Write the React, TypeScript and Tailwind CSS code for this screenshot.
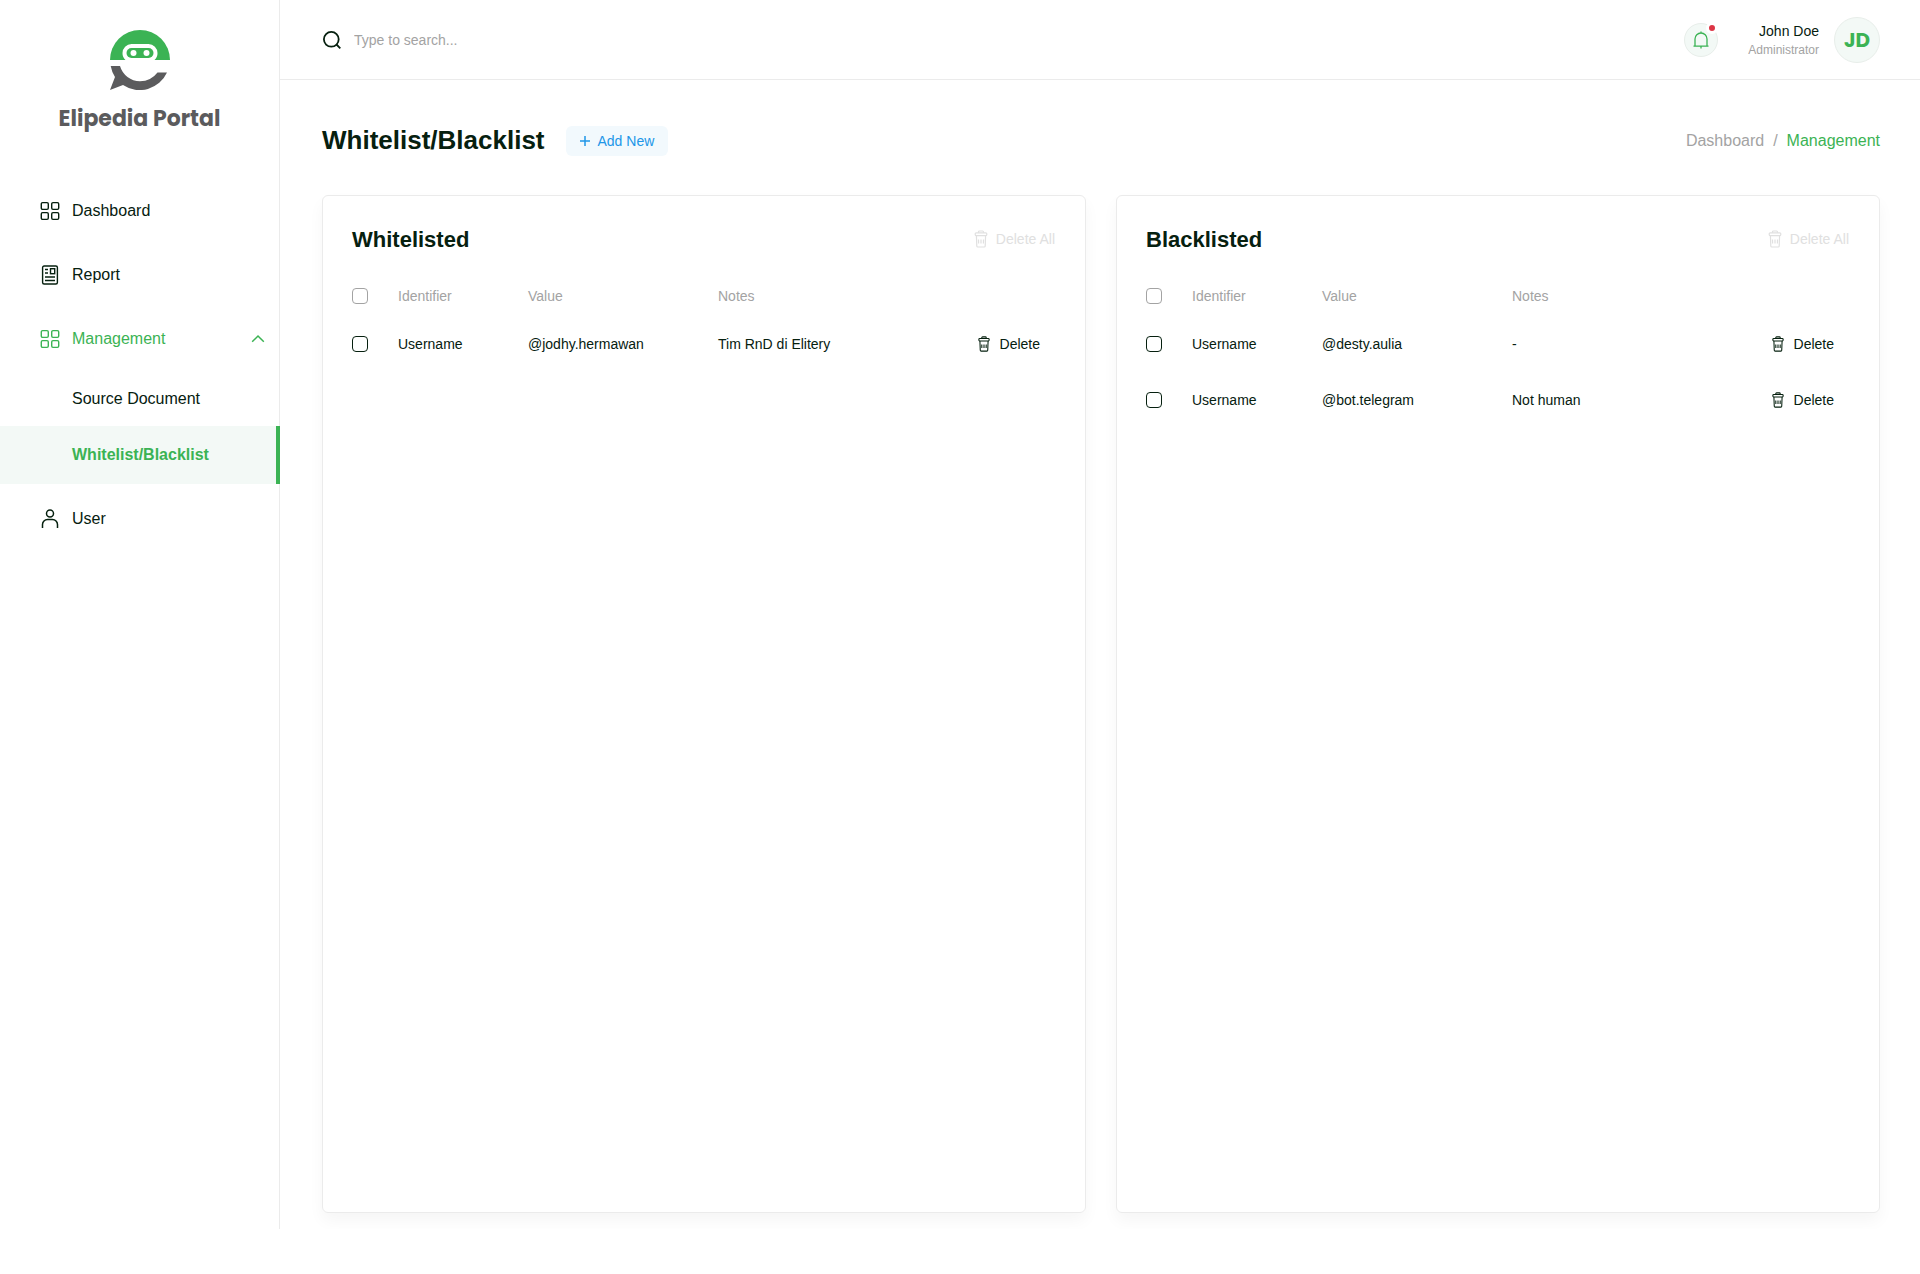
import React, { useState } from 'react';

// Type definitions
interface Entry {
  id: number;
  identifier: string;
  value: string;
  notes: string;
}

interface IconProps {
  className?: string;
}

// Sample data
const whitelisted: Entry[] = [
  { id: 1, identifier: 'Username', value: '@jodhy.hermawan', notes: 'Tim RnD di Elitery' },
];

const blacklisted: Entry[] = [
  { id: 1, identifier: 'Username', value: '@desty.aulia', notes: '-' },
  { id: 2, identifier: 'Username', value: '@bot.telegram', notes: 'Not human' },
];

// Icons
const Logo: React.FC = () => (
  <svg viewBox="0 0 60 60" className="size-15" aria-hidden="true">
    <path d="M0 30a30 30 0 0 1 60 0z" fill="#3bb354" />
    <path d="M15.500 30a9 9 0 0 1-3-7 9 9 0 0 1 9-9h17a9 9 0 0 1 9 9 9 9 0 0 1-3 7z" fill="#fff" />
    <rect x="16.5" y="18" width="27" height="10" rx="5" fill="#3bb354" />
    <circle cx="23.5" cy="23" r="3" fill="#fff" />
    <circle cx="36.5" cy="23" r="3" fill="#fff" />
    <path
      d="M.7 36H10a21 21 0 0 0 20 15.2A22 22 0 0 0 47.500 42.500H57A30 30 0 0 1 13 55L0 60l5-13A30 30 0 0 1 .7 36z"
      fill="#5b5b5d"
    />
  </svg>
);

const GridIcon: React.FC<IconProps> = ({ className }) => (
  <svg viewBox="0 0 20 20" className={className} fill="none" stroke="currentColor" strokeWidth="1.4" aria-hidden="true">
    <rect x="1.300" y="1.600" width="7" height="6.800" rx="1.300" />
    <rect x="11.700" y="1.600" width="7" height="6.800" rx="1.300" />
    <rect x="1.300" y="11.600" width="7" height="6.800" rx="1.300" />
    <rect x="11.700" y="11.600" width="7" height="6.800" rx="1.300" />
  </svg>
);

const ReportIcon: React.FC<IconProps> = ({ className }) => (
  <svg viewBox="0 0 20 20" className={className} fill="none" stroke="currentColor" strokeWidth="1.4" aria-hidden="true">
    <rect x="2.600" y="1" width="14.800" height="18" rx="1.500" />
    <rect x="10.500" y="3.700" width="4.200" height="5" />
    <path d="M5 4.500h3M5 8h3M5 12h10M5 15.500h10" />
  </svg>
);

const UserIcon: React.FC<IconProps> = ({ className }) => (
  <svg viewBox="0 0 20 20" className={className} fill="none" stroke="currentColor" strokeWidth="1.5" aria-hidden="true">
    <circle cx="10" cy="4.500" r="3.500" />
    <path d="M2.500 19v-3.500a5 5 0 0 1 5-5h5a5 5 0 0 1 5 5V19" />
  </svg>
);

const SearchIcon: React.FC<IconProps> = ({ className }) => (
  <svg viewBox="0 0 20 20" className={className} fill="none" stroke="currentColor" strokeWidth="1.8" aria-hidden="true">
    <circle cx="9.300" cy="9.300" r="7.400" />
    <path d="M14.500 14.500l3.800 3.800" />
  </svg>
);

const BellIcon: React.FC<IconProps> = ({ className }) => (
  <svg viewBox="0 0 18 18" className={className} fill="none" stroke="currentColor" strokeWidth="1.3" aria-hidden="true">
    <path d="M3 15.200V8a6 6 0 0 1 12 0v7.200M1.500 15.200h15M9 .5v1.500M9 15.500v2" />
  </svg>
);

const TrashIcon: React.FC<IconProps> = ({ className }) => (
  <svg viewBox="0 0 18 18" className={className} fill="none" stroke="currentColor" strokeWidth="1.2" aria-hidden="true">
    <path d="M6.500 2.800V1.900a.9.9 0 0 1 .9-.9h3.200a.9.9 0 0 1 .9.900v.9" />
    <rect x="3.200" y="2.800" width="11.600" height="2.800" rx="1" />
    <path d="M4.400 5.600l.4 10.400a1 1 0 0 0 1 1h6.400a1 1 0 0 0 1-1l.4-10.400M6.500 9.500l.1 4M9 9.500v4M11.500 9.500l-.1 4" />
  </svg>
);

const ChevronUpIcon: React.FC<IconProps> = ({ className }) => (
  <svg viewBox="0 0 14 14" className={className} fill="none" stroke="currentColor" strokeWidth="1.5" aria-hidden="true">
    <path d="M1.200 9.800L7 4l5.800 5.800" />
  </svg>
);

const PlusIcon: React.FC<IconProps> = ({ className }) => (
  <svg viewBox="0 0 10 10" className={className} fill="none" stroke="currentColor" strokeWidth="1.5" aria-hidden="true">
    <path d="M5 0v10M0 5h10" />
  </svg>
);

const checkboxStyle =
  'block size-4 appearance-none rounded border checked:border-[#3bb354] checked:bg-[#3bb354]';

const Sidebar: React.FC = () => {
  const [open, setOpen] = useState(true);

  return (
    <aside className="w-70 shrink-0 border-r border-[#ebebeb]">
      <div className="flex flex-col items-center pt-[30px]">
        <Logo />
        <span className="mt-[13px] font-['Poppins',Inter,sans-serif] text-[22px] leading-8 font-bold text-[#5b5b5d]">
          Elipedia Portal
        </span>
      </div>

      <nav className="mt-11 text-base">
        <a href="#dashboard" className="flex h-16 items-center gap-3 pl-10">
          <GridIcon className="size-5" />
          Dashboard
        </a>
        <a href="#report" className="flex h-16 items-center gap-3 pl-10">
          <ReportIcon className="size-5" />
          Report
        </a>
        <button
          type="button"
          aria-expanded={open}
          onClick={() => setOpen(!open)}
          className="flex h-16 w-full items-center gap-3 pr-[14px] pl-10 text-[#3bb354]"
        >
          <GridIcon className="size-5" />
          Management
          <ChevronUpIcon className={open ? 'ml-auto size-[14px]' : 'ml-auto size-[14px] rotate-180'} />
        </button>
        {open && (
          <div className="-mr-px">
            <a href="#source" className="flex h-[55px] items-center pl-[72px]">
              Source Document
            </a>
            <a
              href="#lists"
              className="flex h-[58px] items-center border-r-4 border-[#3bb354] bg-[#f3f9f6] pl-[72px] font-bold text-[#3bb354]"
            >
              Whitelist/Blacklist
            </a>
          </div>
        )}
        <a href="#user" className="flex h-[69px] items-center gap-3 pl-10">
          <UserIcon className="size-5" />
          User
        </a>
      </nav>
    </aside>
  );
};

const Header: React.FC = () => (
  <header className="flex h-20 items-center justify-between border-b border-[#ebebeb] pr-10 pl-[42px]">
    <label className="flex items-center gap-3">
      <SearchIcon className="size-5" />
      <input
        type="text"
        aria-label="Search"
        placeholder="Type to search..."
        className="w-80 text-sm outline-none placeholder:text-[#a3a3a3]"
      />
    </label>
    <div className="flex items-center">
      <button
        type="button"
        aria-label="Notifications"
        className="relative flex size-[34px] items-center justify-center rounded-full border border-[#e8eeea] bg-[#f3f9f6] text-[#3bb354]"
      >
        <BellIcon className="size-[18px]" />
        <span className="absolute -top-0.5 -right-px size-3 rounded-full border-3 border-white bg-[#dc3545]" />
      </button>
      <div className="ml-[30px] text-right">
        <p className="text-sm leading-5">John Doe</p>
        <p className="text-xs leading-[18px] text-[#a3a3a3]">Administrator</p>
      </div>
      <div className="ml-[15px] flex size-[46px] items-center justify-center rounded-full border border-[#e8eeea] bg-[#f3f9f6] font-['Poppins',Inter,sans-serif] text-xl font-bold text-[#3bb354]">
        JD
      </div>
    </div>
  </header>
);

interface ListCardProps {
  title: string;
  entries: Entry[];
}

const ListCard: React.FC<ListCardProps> = ({ title, entries }) => (
  <section className="min-h-[1018px] rounded-md border border-[#ebebeb] pt-[27px] pr-[30px] pl-[29px] shadow-[0_8px_16px_rgba(0,0,0,0.04)]">
    <div className="flex h-8 items-center justify-between">
      <h2 className="text-[22px] font-bold">{title}</h2>
      <button type="button" disabled className="flex items-center gap-1.5 text-sm text-[#e0e0e0]">
        <TrashIcon className="size-[18px]" />
        Delete All
      </button>
    </div>
    <table className="mt-[21px] w-full table-fixed text-left text-sm">
      <thead>
        <tr className="h-10 text-[#a3a3a3]">
          <th className="w-[46px] font-normal">
            <input type="checkbox" aria-label={`Select all ${title}`} className={`${checkboxStyle} border-[#a3a3a3]`} />
          </th>
          <th className="w-[130px] font-normal">Identifier</th>
          <th className="w-[190px] font-normal">Value</th>
          <th className="font-normal">Notes</th>
          <th className="w-[100px]" />
        </tr>
      </thead>
      <tbody>
        {entries.map(entry => (
          <tr key={entry.id} className="h-14">
            <td>
              <input type="checkbox" aria-label={`Select ${entry.value}`} className={`${checkboxStyle} border-[#06200f]`} />
            </td>
            <td>{entry.identifier}</td>
            <td>{entry.value}</td>
            <td>{entry.notes}</td>
            <td>
              <button type="button" className="ml-auto flex items-center gap-2 pr-[15px]">
                <TrashIcon className="size-4" />
                Delete
              </button>
            </td>
          </tr>
        ))}
      </tbody>
    </table>
  </section>
);

const App: React.FC = () => (
  <div className="flex bg-white font-['Liberation_Sans',Arial,sans-serif] text-[#06200f]">
    <Sidebar />
    <div className="min-w-0 flex-1">
      <Header />
      <main className="pt-10 pr-10 pb-4 pl-[42px]">
        <div className="flex h-[41px] items-center justify-between">
          <div className="flex items-center gap-[21px]">
            <h1 className="text-[26px] font-bold">Whitelist/Blacklist</h1>
            <button
              type="button"
              className="flex h-[30px] items-center gap-2 rounded-md bg-[#f2f9fd] px-[14px] text-sm text-[#2196e8]"
            >
              <PlusIcon className="size-[10px]" />
              Add New
            </button>
          </div>
          <nav aria-label="Breadcrumb" className="flex gap-[9px] text-base text-[#a3a3a3]">
            <a href="#dashboard">Dashboard</a>
            <span>/</span>
            <a href="#management" className="text-[#3bb354]">Management</a>
          </nav>
        </div>
        <div className="mt-[34px] grid grid-cols-2 gap-[30px]">
          <ListCard title="Whitelisted" entries={whitelisted} />
          <ListCard title="Blacklisted" entries={blacklisted} />
        </div>
      </main>
    </div>
  </div>
);

export default App;
